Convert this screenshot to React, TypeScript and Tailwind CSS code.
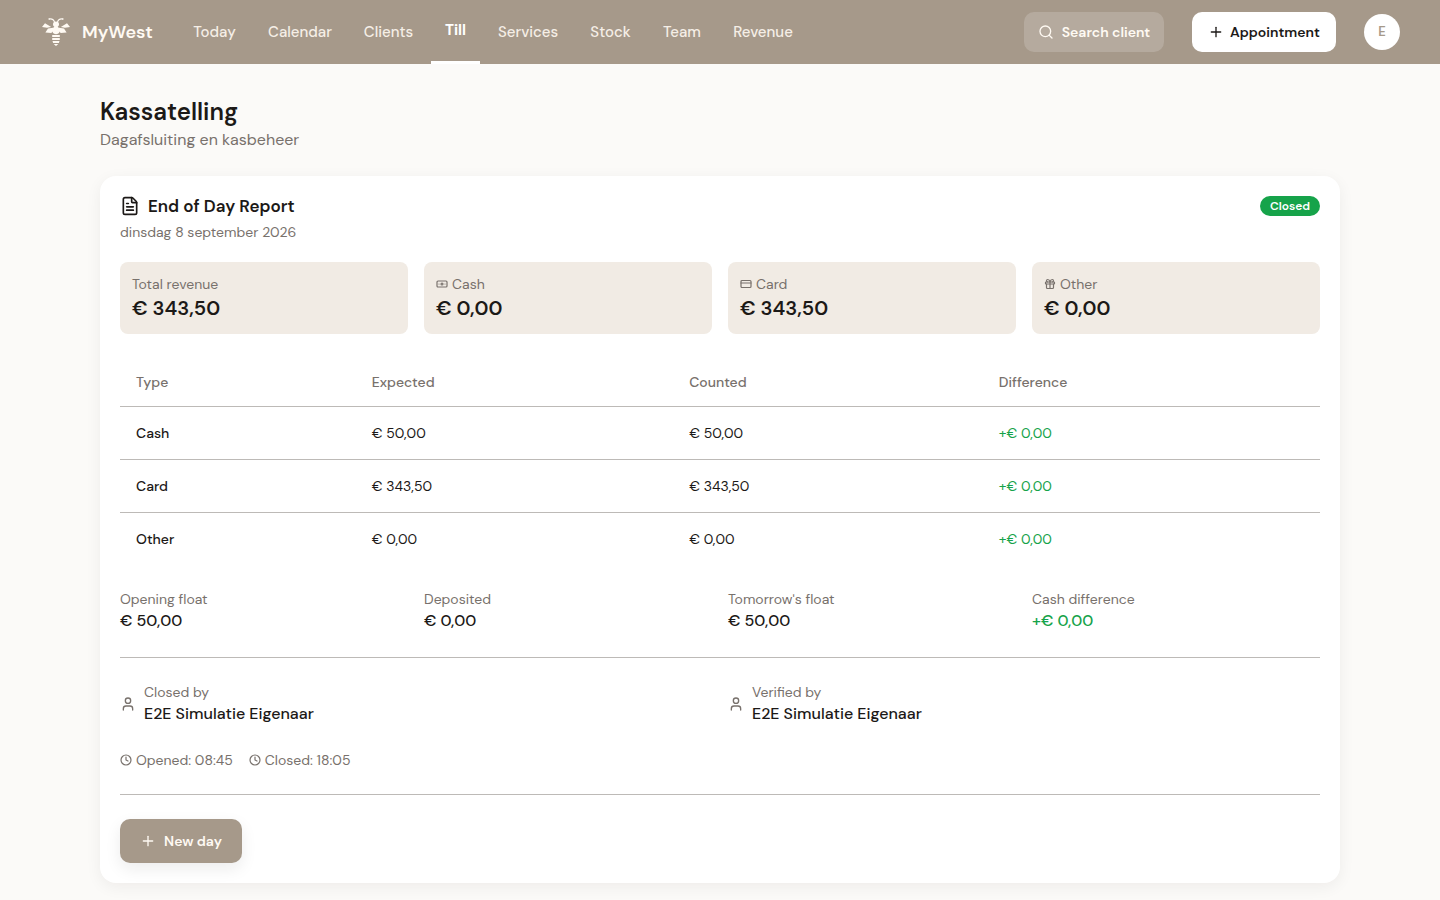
import type { ReactNode } from "react";
import { Banknote, Clock, CreditCard, FileText, Gift, Plus, Search, User } from "lucide-react";

const links = [
  { label: "Today", width: "w-[71px]" },
  { label: "Calendar", width: "w-[92px]" },
  { label: "Clients", width: "w-[77px]" },
  { label: "Till", width: "w-[49px]" },
  { label: "Services", width: "w-[88px]" },
  { label: "Stock", width: "w-[69px]" },
  { label: "Team", width: "w-[66px]" },
  { label: "Revenue", width: "w-[88px]" },
];

const tiles: { label: string; value: string; icon?: ReactNode }[] = [
  { label: "Total revenue", value: "€ 343,50" },
  { label: "Cash", value: "€ 0,00", icon: <Banknote className="size-3" strokeWidth={2.4} /> },
  { label: "Card", value: "€ 343,50", icon: <CreditCard className="size-3" strokeWidth={2.4} /> },
  { label: "Other", value: "€ 0,00", icon: <Gift className="size-3" strokeWidth={2.4} /> },
];

const rows = [
  ["Cash", "€ 50,00", "€ 50,00", "+€ 0,00"],
  ["Card", "€ 343,50", "€ 343,50", "+€ 0,00"],
  ["Other", "€ 0,00", "€ 0,00", "+€ 0,00"],
];

const floats = [
  { label: "Opening float", value: "€ 50,00" },
  { label: "Deposited", value: "€ 0,00" },
  { label: "Tomorrow's float", value: "€ 50,00" },
  { label: "Cash difference", value: "+€ 0,00", positive: true },
];

function Bee() {
  return (
    <svg viewBox="0 0 28 30" className="h-[30px] w-7 text-[#fffaf3]" fill="currentColor" aria-hidden="true">
      <path
        d="M12.6 5.4C12 3 10 1.6 7.2 2M15.4 5.4C16 3 18 1.6 20.8 2"
        fill="none"
        stroke="currentColor"
        strokeWidth="1.1"
        strokeLinecap="round"
      />
      <circle cx="7.2" cy="2" r="0.8" />
      <circle cx="20.8" cy="2" r="0.8" />
      <ellipse cx="14" cy="7.300" rx="3" ry="2.700" />
      <path d="M12.600 9h2.800l1.800 2.600v4.200c-.7.900-1.800 1.400-3.200 1.400s-2.500-.5-3.200-1.400v-4.200Z" />
      <path d="M9.200 9.900 3 6.200 0 10l5 .7ZM18.800 9.900 25 6.200 28 10l-5 .7Z" />
      <path d="M11 10.800 6 11.600 3.400 15.400l5.800.7 2.400-2ZM17 10.800l5 .8 2.600 3.800-5.800.7-2.400-2Z" />
      <path d="M10.200 18h7.600v2h-7.600ZM10.200 21.100h7.600v1.900h-7.600ZM10.500 24.100h7l-.6 1.900h-5.800ZM11.700 27h4.600L14 28.900Z" />
    </svg>
  );
}

function Person({ label, name }: { label: string; name: string }) {
  return (
    <div className="flex items-center gap-2">
      <User className="size-4 text-[#78716c]" />
      <div>
        <p className="text-sm text-[#78716c]">{label}</p>
        <p className="text-base font-medium">{name}</p>
      </div>
    </div>
  );
}

export default function App() {
  return (
    <div className="min-h-screen bg-[#fbfaf8] font-['DM_Sans','Inter',sans-serif] text-[#1c1917]">
      <header className="flex h-16 items-center bg-[#a6998a] px-10">
        <a href="#" className="flex w-[139px] items-center gap-3 pl-0.5 text-lg font-semibold text-[#fffaf3]">
          <Bee />
          MyWest
        </a>
        <nav className="flex h-full gap-1 whitespace-nowrap text-[15px]">
          {links.map(({ label, width }) => (
            <a
              key={label}
              href="#"
              className={`${width} flex items-center justify-center ${
                label === "Till" ? "border-b-3 border-white font-bold text-white" : "font-medium text-[#f5eee6]"
              }`}
            >
              {label}
            </a>
          ))}
        </nav>
        <div className="ml-auto flex items-center gap-7 whitespace-nowrap text-sm font-semibold">
          <button className="flex h-10 w-[140px] items-center justify-center gap-2 rounded-[10px] bg-[#b5aa9e] text-[#fffaf3]">
            <Search className="size-4" />
            Search client
          </button>
          <button className="flex h-10 w-36 items-center justify-center gap-1.5 rounded-[10px] bg-white">
            <Plus className="size-4" />
            Appointment
          </button>
          <button className="size-9 rounded-full bg-white text-[13px] text-[#a6998a]">E</button>
        </div>
      </header>

      <main className="mx-auto max-w-[1280px] px-5 pt-8 pb-8">
        <h1 className="text-2xl font-semibold">Kassatelling</h1>
        <p className="text-base text-[#78716c]">Dagafsluiting en kasbeheer</p>

        <section className="mt-6 rounded-2xl bg-white p-5 shadow-[0_4px_16px_rgba(28,25,23,0.06)]">
          <div className="flex items-start justify-between">
            <div>
              <h2 className="flex items-center gap-2 text-[17px]/5 font-semibold">
                <FileText className="size-5" />
                End of Day Report
              </h2>
              <p className="mt-1.5 text-sm text-[#78716c]">dinsdag 8 september 2026</p>
            </div>
            <span className="flex h-5 w-15 items-center justify-center rounded-full bg-[#16a34a] text-xs font-semibold text-white">
              Closed
            </span>
          </div>

          <div className="mt-5 grid grid-cols-4 gap-4">
            {tiles.map(({ label, value, icon }) => (
              <div key={label} className="rounded-lg bg-[#f1ebe4] p-3">
                <p className="flex items-center gap-1 text-sm text-[#78716c]">
                  {icon}
                  {label}
                </p>
                <p className="text-xl font-semibold">{value}</p>
              </div>
            ))}
          </div>

          <table className="mt-6 w-full table-fixed border-separate border-spacing-0 text-left text-sm">
            <thead>
              <tr className="h-[49px] text-[#78716c] [&>th]:border-b [&>th]:border-[#bdbab7] [&>th]:px-4 [&>th]:font-medium">
                <th className="w-[19.65%]">Type</th>
                <th className="w-[26.45%]">Expected</th>
                <th className="w-[25.8%]">Counted</th>
                <th>Difference</th>
              </tr>
            </thead>
            <tbody className="[&>tr:not(:last-child)>td]:border-b [&>tr>td]:border-[#bdbab7]">
              {rows.map(([type, expected, counted, difference]) => (
                <tr key={type} className="h-[53px] last:h-[52px] [&>td]:px-4">
                  <td className="font-medium">{type}</td>
                  <td>{expected}</td>
                  <td>{counted}</td>
                  <td className="text-[#16a34a]">{difference}</td>
                </tr>
              ))}
            </tbody>
          </table>

          <div className="mt-6 grid grid-cols-4 gap-4">
            {floats.map(({ label, value, positive }) => (
              <div key={label}>
                <p className="text-sm text-[#78716c]">{label}</p>
                <p className={positive ? "text-base font-medium text-[#16a34a]" : "text-base font-medium"}>{value}</p>
              </div>
            ))}
          </div>

          <div className="mt-6 grid grid-cols-2 gap-4 border-t border-[#bdbab7] pt-6">
            <Person label="Closed by" name="E2E Simulatie Eigenaar" />
            <Person label="Verified by" name="E2E Simulatie Eigenaar" />
          </div>

          <div className="mt-6 flex gap-4 text-sm text-[#78716c]">
            <span className="flex items-center gap-1">
              <Clock className="size-3" strokeWidth={2.4} />
              Opened: 08:45
            </span>
            <span className="flex items-center gap-1">
              <Clock className="size-3" strokeWidth={2.4} />
              Closed: 18:05
            </span>
          </div>

          <div className="mt-6 border-t border-[#bdbab7] pt-6">
            <button className="flex h-11 w-[122px] items-center justify-center gap-2 rounded-[10px] bg-[#a6998a] text-sm font-semibold text-[#fffaf3] shadow-[0_6px_16px_rgba(28,25,23,0.08)]">
              <Plus className="size-4" />
              New day
            </button>
          </div>
        </section>
      </main>
    </div>
  );
}
